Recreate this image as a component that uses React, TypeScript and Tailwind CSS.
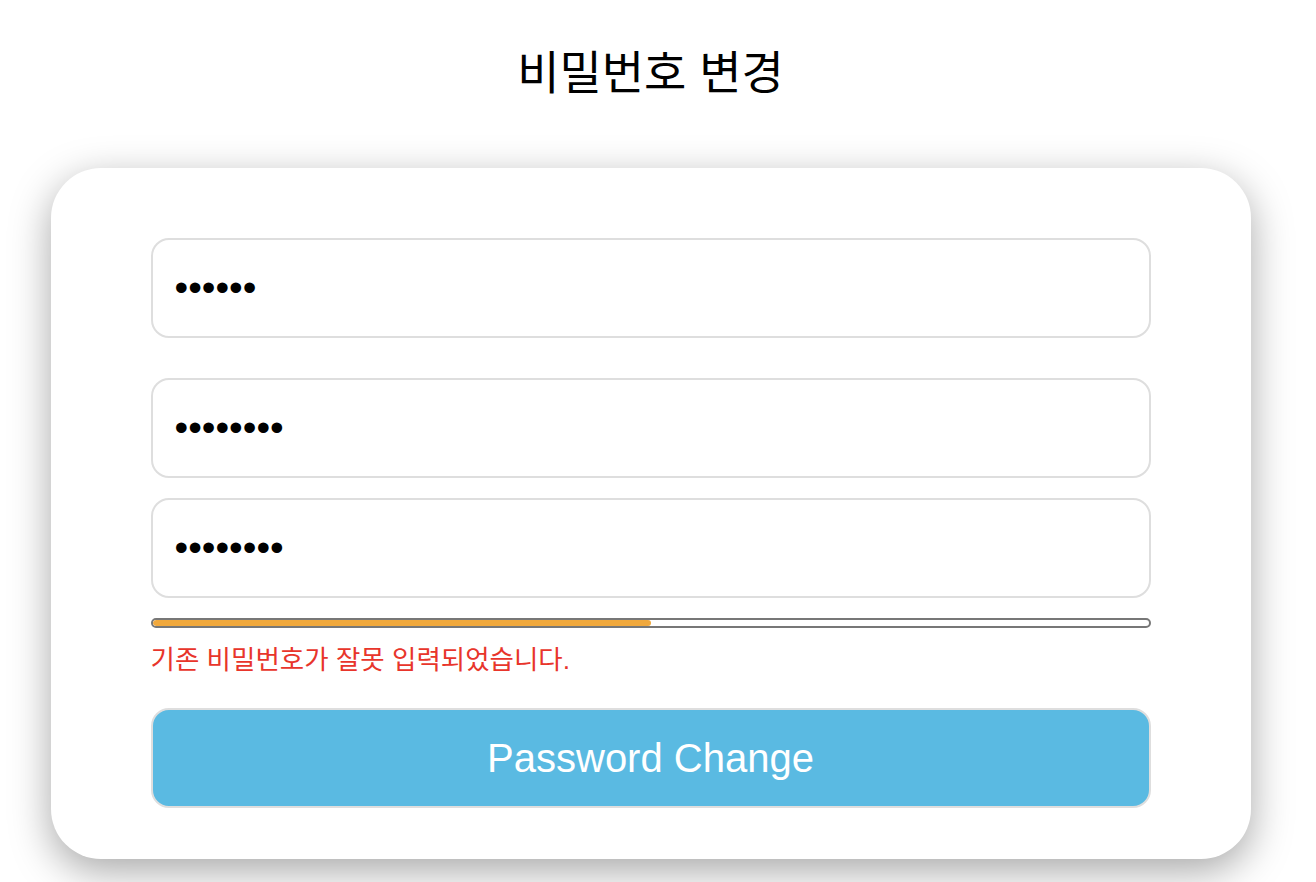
import { useState } from "react";

const font = { fontFamily: '"Liberation Sans", "Noto Sans CJK KR", sans-serif' };

const PasswordInput = ({ value, className }: { value: string; className?: string }) => {
  return (
    <input
      type="password"
      defaultValue={value}
      className={`block w-full h-[100px] px-[22px] rounded-[18px] border-2 border-[#dedede] bg-white text-[39px] text-black outline-none ${className ?? ""}`}
    />
  );
};

export default function App() {
  const [progress] = useState(50);

  return (
    <div className="min-h-[960px] w-[1301px] bg-white" style={font}>
      <h1 className="pt-[40px] text-center text-[46px] leading-[66px] text-black">비밀번호 변경</h1>
      <div className="mx-auto mt-[62px] w-[1200px] rounded-[50px] bg-white px-[100px] pt-[70px] pb-[51px] shadow-[0_12px_40px_rgba(0,0,0,0.35)]">
        <PasswordInput value="123456" />
        <PasswordInput value="12345678" className="mt-[40px]" />
        <PasswordInput value="12345678" className="mt-[20px]" />
        <div className="mt-[20px] h-[10px] w-full overflow-hidden rounded-full border-2 border-[#777]">
          <div className="h-full rounded-full bg-[#f0a83c]" style={{ width: `${progress}%` }} />
        </div>
        <p className="mt-[16px] text-[26.5px] leading-[32px] text-[#e8352b]">기존 비밀번호가 잘못 입력되었습니다.</p>
        <button className="mt-[32px] block h-[100px] w-full rounded-[18px] border-2 border-[#dedede] bg-[#5abae2] text-[40px] text-white">
          Password Change
        </button>
      </div>
    </div>
  );
}
